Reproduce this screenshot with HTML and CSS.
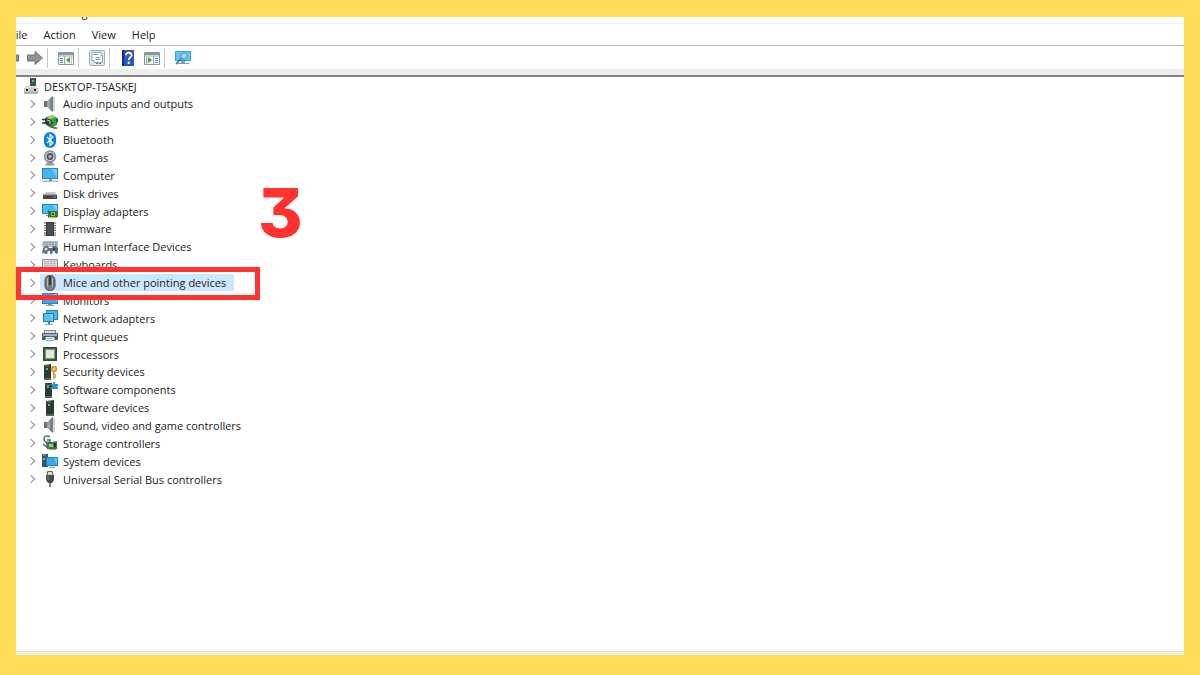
FILE: index.html
```html
<!DOCTYPE html>
<html lang="en">
<head>
  <meta charset="UTF-8" />
  <meta name="viewport" content="width=device-width, initial-scale=1.0" />
  <title>Device Manager</title>
  <link rel="stylesheet" href="styles.css">
</head>
<body>
  <div class="window">
    <div class="titlebar"><span>Device Manager</span></div>

    <div class="menubar">
      <button>File</button>
      <button>Action</button>
      <button>View</button>
      <button>Help</button>
    </div>

    <div class="toolbar">
      <button aria-label="Back">
        <svg class="icon" viewBox="0 0 16 16"><path d="M15.5 5H8V1.5L.5 8 8 14.5V11h7.5z" fill="#8b8b8b" stroke="#707070"/></svg>
      </button>
      <button aria-label="Forward">
        <svg class="icon" viewBox="0 0 16 16"><path d="M.5 5H8V1.5L15.5 8 8 14.5V11H.5z" fill="#929292" stroke="#737373"/></svg>
      </button>
      <span class="separator"></span>
      <button aria-label="Show console tree">
        <svg class="icon" viewBox="0 0 16 16"><path d="M.5 2.5h15v12H.5z" fill="#f5f7f8" stroke="#8a949b"/><path d="M1 3h14v2H1z" fill="#8b99a4"/><path d="M1 6h14" stroke="#a9b1b8"/><path d="M6.500 6v8" stroke="#9aa3aa"/><path d="M2 8.500h3M2 10.500h3M2 12.500h3" stroke="#5d87a5"/><path d="M12 7v6L8 10z" fill="#31a82c"/><path d="M13.500 7v7" stroke="#c4cacf"/></svg>
      </button>
      <span class="separator"></span>
      <button aria-label="Properties">
        <svg class="icon" viewBox="0 0 16 16"><rect x=".5" y=".5" width="15" height="15" rx="1" fill="#e3e8eb" stroke="#a2abb1"/><path d="M3 2.500h9v3h1.500v7H5v-2H3z" fill="#fff" stroke="#98a2a9"/><path d="M4.500 4.500h5M6.500 7.500h5M6.500 9.500h5" stroke="#829bac"/><path d="M7 13.500h2m1 0h2" stroke="#687e8d"/></svg>
      </button>
      <span class="separator"></span>
      <button aria-label="Help topics">
        <svg class="icon" viewBox="0 0 16 16"><path d="M2 0h12v16H2z" fill="#3155bd"/><path d="M2 0h2v16H2z" fill="#162f86"/><path d="M6 5.200c0-3.400 5.500-3.300 5.500 0 0 2.300-2.700 2.200-2.700 4.800" fill="none" stroke="#fff" stroke-width="1.800"/><circle cx="8.800" cy="12.800" r="1.200" fill="#fff"/></svg>
      </button>
      <button aria-label="Show action pane">
        <svg class="icon" viewBox="0 0 16 16"><path d="M.5 2.500h15v12H.5z" fill="#f5f7f8" stroke="#8a949b"/><path d="M1 3h14v2H1z" fill="#8b99a4"/><path d="M1 6h14" stroke="#a9b1b8"/><path d="M9.500 6v8M2.500 7v7" stroke="#9aa3aa"/><path d="M11 8.500h3M11 10.500h3M11 12.500h3" stroke="#5d87a5"/><path d="M4 7v6l4-3z" fill="#31a82c"/></svg>
      </button>
      <span class="separator"></span>
      <button aria-label="Scan for hardware changes">
        <svg class="icon" viewBox="0 0 16 16"><path d="M0 1h16v10H0z" fill="#36a2df"/><path d="M1 2h14v8H1z" fill="#62c4f1"/><path d="M6 11h4v2h4v1H3v-1h3z" fill="#8399a6"/><circle cx="9" cy="6" r="3.200" fill="#a0dcf8" stroke="#4b91b8"/><path d="M6.500 8.500 1 14" stroke="#557f98" stroke-width="1.800"/></svg>
      </button>
    </div>

    <div class="content">
      <div class="root">
        <svg class="icon" viewBox="0 0 16 16"><path d="M7 0h6v8H7z" fill="#455049"/><path d="M9 2h2v2H9z" fill="#43cf79"/><path d="M3 8h10l2 3v4H1v-4z" fill="#d9dddf"/><path d="M1 10h14v5H1z" fill="#c3c8cb"/><path d="M3 11h2v2H3zm8 0h2v2h-2z" fill="#24292b"/><path d="M1 15h14" stroke="#777f84"/></svg>
        <span>DESKTOP-T5ASKEJ</span>
      </div>

      <ul class="tree">
        <li>
          <button class="expander" aria-label="Expand"></button>
          <span class="node"><svg class="icon" viewBox="0 0 16 16"><path d="M2 5h4v6H2z" fill="#6f7275"/><path d="M5 5l6-5v16l-6-5z" fill="#a3a6a8"/><path d="M8 2.500L11 0v16l-3-2.500z" fill="#7c8083"/><path d="M12 1v14" stroke="#c0c3c5" stroke-width="1.500"/></svg>Audio inputs and outputs</span>
        </li>
        <li>
          <button class="expander" aria-label="Expand"></button>
          <span class="node"><svg class="icon" viewBox="0 0 16 16"><path d="M4 3l7-2 4 3v7l-6 3-5-3z" fill="#3c9d37"/><path d="M5 3l6-2 3 2-7 3z" fill="#91d66f"/><path d="M14 5l2-1v4l-2 1z" fill="#285f28"/><path d="M0 5.500h5M0 9h4" stroke="#333" stroke-width="1.500"/><path d="M3 4l5 1 3 4-3 3-5-2z" fill="#373c39"/><path d="M5 6l3 1v3" fill="none" stroke="#d0d5d0"/><path d="M8 11c2 4 5 3 7 3" fill="none" stroke="#4c514d" stroke-width="1.500"/></svg>Batteries</span>
        </li>
        <li>
          <button class="expander" aria-label="Expand"></button>
          <span class="node"><svg class="icon" viewBox="0 0 16 16"><rect x="2" y="0" width="12" height="16" rx="6" fill="#0781e5"/><path d="M5 5l6 6-3 2.500v-11L11 5l-6 6" fill="none" stroke="#fff" stroke-width="1.200"/></svg>Bluetooth</span>
        </li>
        <li>
          <button class="expander" aria-label="Expand"></button>
          <span class="node"><svg class="icon" viewBox="0 0 16 16"><path d="M6 11h4l1 3H5z" fill="#737b7e"/><ellipse cx="8" cy="14.500" rx="5" ry="1.200" fill="#9da4a8"/><circle cx="8" cy="6.500" r="6.300" fill="#8c9497"/><circle cx="8" cy="6.500" r="4.600" fill="#d1d5d6"/><circle cx="8" cy="6.500" r="3.400" fill="#4d5459"/><circle cx="8" cy="6.500" r="1.700" fill="#a6b2bb"/></svg>Cameras</span>
        </li>
        <li>
          <button class="expander" aria-label="Expand"></button>
          <span class="node"><svg class="icon" viewBox="0 0 16 16"><path d="M0 1h16v11H0z" fill="#2089d0"/><path d="M1 2h14v9H1z" fill="#46b3ef"/><path d="M10 2h5v9z" fill="#72ccf7"/><path d="M0 13.500h16V15H0z" fill="#a7bac5"/><path d="M7 12h3v2H7z" fill="#84939d"/></svg>Computer</span>
        </li>
        <li>
          <button class="expander" aria-label="Expand"></button>
          <span class="node"><svg class="icon" viewBox="0 0 16 16"><path d="M4 7h9l2 3H1z" fill="#c5c8ca"/><path d="M1 10h14v4H1z" fill="#3f4548"/><path d="M1 10h14" stroke="#777d80"/><path d="M11 12h3" stroke="#4abc70"/></svg>Disk drives</span>
        </li>
        <li>
          <button class="expander" aria-label="Expand"></button>
          <span class="node"><svg class="icon" viewBox="0 0 16 16"><path d="M0 1h16v10H0z" fill="#2089c9"/><path d="M1 2h14v8H1z" fill="#49b9ef"/><path d="M11 2h4v7z" fill="#82d3f8"/><path d="M4 12h4v1H4z" fill="#7c929e"/><path d="M7 8h9v6H7z" fill="#257b48"/><path d="M9 9h4v4H9z" fill="#a0b64a"/><path d="M10 10h2v2h-2z" fill="#514d29"/><path d="M8 14.500h7" stroke="#d2aa38"/><path d="M6.500 7v8" stroke="#4e6658"/></svg>Display adapters</span>
        </li>
        <li>
          <button class="expander" aria-label="Expand"></button>
          <span class="node"><svg class="icon" viewBox="0 0 16 16"><path d="M4 1h8v14H4z" fill="#35393b"/><path d="M5 2h6v12H5z" fill="#4a4f52"/><path d="M2 2h2M2 4.500h2M2 7h2M2 9.500h2M2 12h2M2 14h2M12 2h2M12 4.500h2M12 7h2M12 9.500h2M12 12h2M12 14h2" stroke="#55595c" stroke-width="1.200"/></svg>Firmware</span>
        </li>
        <li>
          <button class="expander" aria-label="Expand"></button>
          <span class="node"><svg class="icon" viewBox="0 0 16 16"><path d="M1 2h15v6H0z" fill="#b7bec3"/><path d="M1 3.500h14M1 5.500h14" stroke="#8a949a" stroke-dasharray="2 1"/><path d="M0 14l1-5 2-2h3l1 2h3l1-2h3l2 2v5l-2 1-2-3h-1l-1 3h-2v-3H6l-1 3H3l-1-2-1 2z" fill="#5f717c"/><circle cx="4" cy="10" r="1.500" fill="#d5dce0"/><circle cx="12" cy="10" r="1.500" fill="#384750"/></svg>Human Interface Devices</span>
        </li>
        <li>
          <button class="expander" aria-label="Expand"></button>
          <span class="node"><svg class="icon" viewBox="0 0 16 16"><path d="M.5 2.500h15v10H.5z" fill="#d6dadd" stroke="#8f989e"/><path d="M2 4.500h12M2 6.500h12M2 8.500h12" stroke="#aab3b9" stroke-dasharray="2 1"/><path d="M4 10.500h8" stroke="#8d989e"/></svg>Keyboards</span>
        </li>
        <li class="selected">
          <button class="expander" aria-label="Expand"></button>
          <span class="node"><svg class="icon" viewBox="0 0 16 16"><rect x="3" y=".5" width="10" height="15" rx="4.500" fill="#737a7e" stroke="#4a5053"/><path d="M5.500 3v9M10.500 3v9" stroke="#b1b8bc"/><path d="M8 1v9" stroke="#1e2326" stroke-width="1.500"/><path d="M5 12q3 3 6 0" fill="none" stroke="#899196"/></svg>Mice and other pointing devices</span>
          <span class="highlight-box"></span>
          <strong class="step">3</strong>
        </li>
        <li>
          <button class="expander" aria-label="Expand"></button>
          <span class="node"><svg class="icon" viewBox="0 0 16 16"><path d="M0 1h16v11H0z" fill="#2189d0"/><path d="M1 2h14v9H1z" fill="#3ba8e9"/><path d="M11 2h4v9z" fill="#79cdf6"/><path d="M6 12h4v1h2v1H4v-1h2z" fill="#839ba9"/></svg>Monitors</span>
        </li>
        <li>
          <button class="expander" aria-label="Expand"></button>
          <span class="node"><svg class="icon" viewBox="0 0 16 16"><path d="M4 0h12v10H4z" fill="#2183b7"/><path d="M5 1h10v8H5z" fill="#49bbeb"/><path d="M1 3h11v9H1z" fill="#1f7cb0"/><path d="M2 4h9v7H2z" fill="#55c3f1"/><path d="M8 4h3v7z" fill="#8bd9f8"/><path d="M6 12h2v2H6z" fill="#677f8b"/><path d="M3 14.500h8" stroke="#91a7b2"/></svg>Network adapters</span>
        </li>
        <li>
          <button class="expander" aria-label="Expand"></button>
          <span class="node"><svg class="icon" viewBox="0 0 16 16"><path d="M2 2h12v3H2z" fill="#7b878e"/><path d="M0 5h16v7H0z" fill="#53616a"/><path d="M3 3h10v2H3z" fill="#dce3e7"/><path d="M1 7h14" stroke="#c2cbd0" stroke-width="1.500"/><path d="M4 9h8l1 5H3z" fill="#f0fafe"/><path d="M5 10.500h6M4 12.500h8" stroke="#67bbde"/></svg>Print queues</span>
        </li>
        <li>
          <button class="expander" aria-label="Expand"></button>
          <span class="node"><svg class="icon" viewBox="0 0 16 16"><path d="M1 1h14v14H1z" fill="#305f43"/><path d="M3 3h10v10H3z" fill="#759a75"/><path d="M4 4h8v8H4z" fill="#e3e9df"/><path d="M1.500 1.500h13v13h-13z" fill="none" stroke="#294f38"/></svg>Processors</span>
        </li>
        <li>
          <button class="expander" aria-label="Expand"></button>
          <span class="node"><svg class="icon" viewBox="0 0 16 16"><path d="M2 1l7-1v16H2z" fill="#303b37"/><path d="M3 2h4" stroke="#798580"/><path d="M4 4h2v2H4z" fill="#48c66e"/><path d="M2 15h7" stroke="#889089"/><circle cx="12" cy="5" r="2.500" fill="#efc568" stroke="#c99a42" stroke-width="1.500"/><path d="M12 8v7M12 11h2M12 13h2" stroke="#cf9d43" stroke-width="1.600"/></svg>Security devices</span>
        </li>
        <li>
          <button class="expander" aria-label="Expand"></button>
          <span class="node"><svg class="icon" viewBox="0 0 16 16"><path d="M3 1h7v15H3z" fill="#303b37"/><path d="M4 3h4" stroke="#798580"/><path d="M5 4h2v2H5z" fill="#48c66e"/><path d="M3 15h7" stroke="#889089"/><path d="M9 2h2V0h2v2h3v2h-1v1h1v2H9V5h1V4H9z" fill="#2c91c9"/></svg>Software components</span>
        </li>
        <li>
          <button class="expander" aria-label="Expand"></button>
          <span class="node"><svg class="icon" viewBox="0 0 16 16"><path d="M4 1l8-1v16H4z" fill="#303834"/><path d="M5 2h4" stroke="#76807b"/><path d="M6 4h2v2H6z" fill="#50bd72"/><path d="M4 15h8" stroke="#808b84"/></svg>Software devices</span>
        </li>
        <li>
          <button class="expander" aria-label="Expand"></button>
          <span class="node"><svg class="icon" viewBox="0 0 16 16"><path d="M2 5h4v6H2z" fill="#6f7275"/><path d="M5 5l6-5v16l-6-5z" fill="#a3a6a8"/><path d="M8 2.500L11 0v16l-3-2.500z" fill="#7c8083"/><path d="M12 1v14" stroke="#c0c3c5" stroke-width="1.500"/></svg>Sound, video and game controllers</span>
        </li>
        <li>
          <button class="expander" aria-label="Expand"></button>
          <span class="node"><svg class="icon" viewBox="0 0 16 16"><path d="M8 2C5 0 2 1 2 4s3 4 6 3V5H5" fill="none" stroke="#596760" stroke-width="1.500"/><path d="M4 8l11-2v8H5z" fill="#347a4d"/><path d="M7 9h4v3H7z" fill="#a7c36b"/><path d="M12 8h2v4h-2z" fill="#24372b"/><path d="M1 9l5 4" stroke="#4b5951" stroke-width="1.500"/><path d="M7 14.500h7" stroke="#a9a66c"/></svg>Storage controllers</span>
        </li>
        <li>
          <button class="expander" aria-label="Expand"></button>
          <span class="node"><svg class="icon" viewBox="0 0 16 16"><path d="M0 1h6v13H0z" fill="#3d515d"/><path d="M1 2h3" stroke="#a0b3bd"/><path d="M1 5h2v2H1z" fill="#4ec96c"/><path d="M4 4h12v9H4z" fill="#167fc6"/><path d="M5 5h10v7H5z" fill="#38a9eb"/><path d="M12 5h3v7z" fill="#69c9fa"/><path d="M7 14.500h6" stroke="#8ca2ae"/></svg>System devices</span>
        </li>
        <li>
          <button class="expander" aria-label="Expand"></button>
          <span class="node"><svg class="icon" viewBox="0 0 16 16"><path d="M5.500.5h5V5h-5z" fill="#d7dadd" stroke="#62676b"/><path d="M4 4h8v5l-2 3H6L4 9z" fill="#454a4f"/><path d="M8 12v4" stroke="#60666b" stroke-width="1.600"/><path d="M6 5v4" stroke="#8b9297"/></svg>Universal Serial Bus controllers</span>
        </li>
      </ul>
    </div>

    <div class="statusbar"></div>
  </div>
</body>
</html>
```

FILE: styles.css
```css
* {
  box-sizing: border-box;
}

body {
  margin: 0;
  height: 100vh;
  padding: 17px 16px 20px;
  background: #ffdd59;
  color: #1c1c1c;
  font-family: "Open Sans", "Noto Sans", sans-serif;
  font-size: 11px;
}

button {
  border: none;
  background: none;
  padding: 0;
  color: inherit;
  font: inherit;
}

.window {
  display: flex;
  flex-direction: column;
  height: 100%;
  background: #fff;
  overflow: hidden;
}

/* only the lower edge of the caption is visible */
.titlebar {
  display: flex;
  align-items: flex-end;
  height: 7px;
  flex-shrink: 0;
  padding-bottom: 3px;
  overflow: hidden;
  line-height: 14px;
  border-bottom: 1px solid #f0ebf0;
}

.menubar {
  display: flex;
  align-items: center;
  height: 22px;
  margin-left: -14px;
  border-bottom: 1px solid #b4b4b4;
}

.menubar button {
  padding: 0 8px;
}

.toolbar {
  display: flex;
  align-items: center;
  height: 31px;
  padding-bottom: 5px;
  margin-left: -17px;
  border-bottom: 2px solid #858585;
  background: linear-gradient(to top, #eee 6px, #fff 6px);
}

.toolbar button {
  display: flex;
  justify-content: center;
  width: 24px;
}

.separator {
  width: 1px;
  height: 20px;
  margin-right: 6px;
  background: #c6c6c6;
}

.icon {
  width: 16px;
  height: 16px;
  flex-shrink: 0;
}

.content {
  flex: 1;
  padding-left: 7px;
}

.root {
  display: flex;
  align-items: center;
  gap: 5px;
  height: 18px;
}

.tree {
  display: grid;
  grid-auto-rows: 1fr;
  height: 393px;
  margin: 0;
  padding: 0;
  list-style: none;
}

.tree li {
  position: relative;
  display: flex;
  align-items: center;
  gap: 2px;
}

.expander {
  display: flex;
  align-items: center;
  justify-content: center;
  width: 15px;
  height: 16px;
}

.expander::before {
  content: "";
  width: 5px;
  height: 5px;
  border-top: 1px solid #8c8c8c;
  border-right: 1px solid #8c8c8c;
  transform: rotate(45deg);
}

.node {
  display: flex;
  align-items: center;
  gap: 5px;
  height: 100%;
  padding: 0 4px 0 2px;
  white-space: nowrap;
}

.selected {
  z-index: 1;
}

.selected .node {
  padding-right: 8px;
  background: #cce8ff;
}

.highlight-box {
  position: absolute;
  top: -7px;
  left: -7px;
  width: 244px;
  height: 33px;
  border: 5px solid #ff3131;
}

.step {
  position: absolute;
  left: 235px;
  bottom: 45px;
  color: #ff3131;
  font-family: Inter, sans-serif;
  font-size: 68px;
  font-weight: 800;
  line-height: 68px;
  font-feature-settings: "cv09";
}

.statusbar {
  height: 4px;
  background: #eee;
  border-top: 1px solid #dfdfdf;
}
```
